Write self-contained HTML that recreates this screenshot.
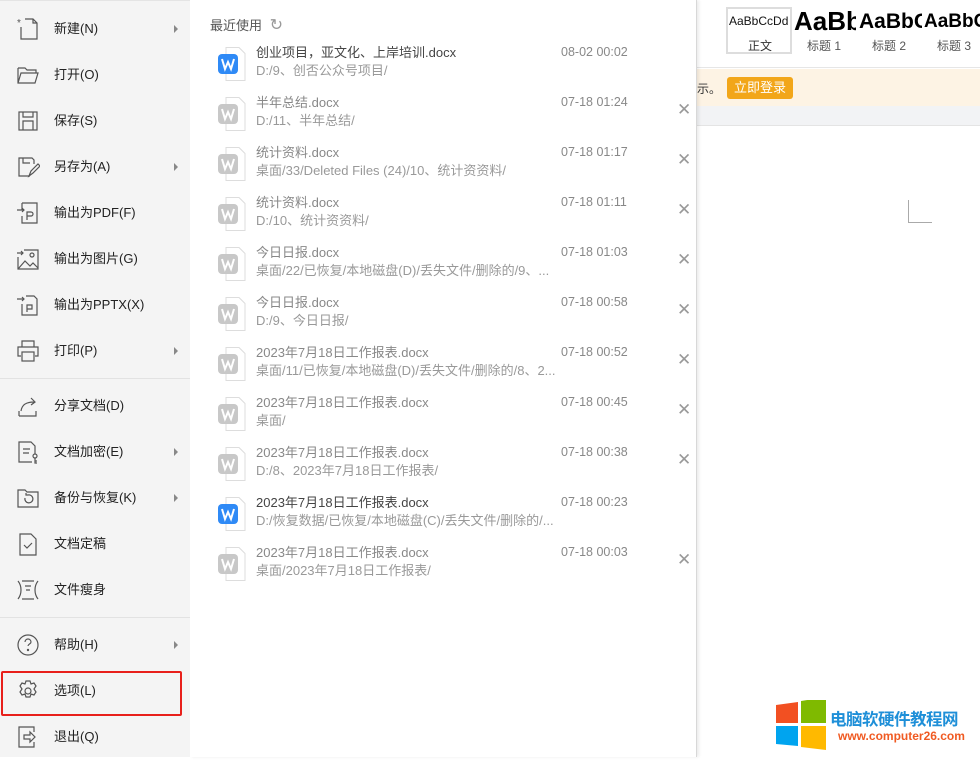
<!DOCTYPE html>
<html><head><meta charset="utf-8"><style>
*{margin:0;padding:0;box-sizing:border-box}
body{width:980px;height:757px;overflow:hidden;position:relative;background:#fff;font-family:"Liberation Sans","Noto Sans CJK SC",sans-serif;}
.side{position:absolute;left:0;top:0;width:190px;height:757px;background:#f4f4f4;border-top:1px solid #e4e4e4}
.it{position:absolute;left:0;width:190px;height:46px;font-size:13px;color:#222}
.it .t{position:absolute;left:54px;top:50%;transform:translateY(-50%);line-height:16px}
.it svg{position:absolute;left:16px;top:50%;transform:translateY(-50%)}
.it .ar{position:absolute;left:174px;top:50%;margin-top:-4px;width:0;height:0;border-left:4px solid #888;border-top:4px solid transparent;border-bottom:4px solid transparent}
.div{position:absolute;left:0;width:190px;height:1px;background:#e2e2e2}
.panel{position:absolute;left:190px;top:0;width:507px;height:757px;background:#fff;border-right:1px solid #d8d8d8;box-shadow:2px 0 3px rgba(0,0,0,.08)}
.hd{position:absolute;left:20px;top:15px;font-size:13px;color:#555}
.row{position:absolute;left:0;width:507px;height:50px;line-height:16px}
.row .ic{position:absolute;left:28px;top:-5px;width:28px;height:35px}
.row .n{position:absolute;left:66px;top:-7px;font-size:13px;color:#444}
.row .p{position:absolute;left:66px;top:11px;font-size:13px;color:#999}
.row .d{position:absolute;left:371px;top:-8px;font-size:12.5px;color:#888}
.row .x{position:absolute;left:487px;top:0px;font-size:17px;color:#999}
.grey .n{color:#888}
</style></head><body>
<div style="position:absolute;left:697px;top:0;width:283px;height:68px;background:#fff;border-bottom:1px solid #e6e6e6"></div>
<div style="position:absolute;left:726px;top:7px;width:66px;height:47px;border:2px solid #ddd;background:#fff"></div>
<div style="position:absolute;left:729px;top:14px;font-size:12px;color:#111">AaBbCcDd</div>
<div style="position:absolute;left:748px;top:37px;font-size:12px;color:#333">正文</div>
<div style="position:absolute;left:794px;top:6px;font-size:26px;font-weight:bold;color:#000;width:62px;overflow:hidden;white-space:nowrap">AaBb</div>
<div style="position:absolute;left:807px;top:37px;font-size:12px;color:#555">标题 1</div>
<div style="position:absolute;left:859px;top:10px;font-size:21px;font-weight:bold;color:#000;width:63px;overflow:hidden;white-space:nowrap">AaBbC</div>
<div style="position:absolute;left:872px;top:37px;font-size:12px;color:#555">标题 2</div>
<div style="position:absolute;left:924px;top:11px;font-size:19px;font-weight:bold;color:#000;white-space:nowrap">AaBbC</div>
<div style="position:absolute;left:937px;top:37px;font-size:12px;color:#555">标题 3</div>
<div style="position:absolute;left:697px;top:69px;width:283px;height:37px;background:#fdf3e4"></div>
<div style="position:absolute;left:697px;top:80px;font-size:12px;color:#333">示。</div>
<div style="position:absolute;left:727px;top:77px;width:66px;height:22px;background:#f2a619;border-radius:3px;color:#fff;font-size:13px;text-align:center;line-height:22px">立即登录</div>
<div style="position:absolute;left:697px;top:106px;width:283px;height:20px;background:#f2f3f5;border-bottom:1px solid #e4e4e4"></div>
<div style="position:absolute;left:908px;top:200px;width:24px;height:23px;border-left:1px solid #aaa;border-bottom:1px solid #aaa"></div>
<svg style="position:absolute;left:776px;top:700px" width="50" height="50"><polygon points="0,5 22,2 22,23 0,23" fill="#f25022"/><polygon points="25,1 50,-3 50,23 25,23" fill="#7fba00"/><polygon points="0,26 22,26 22,46 0,44" fill="#00a4ef"/><polygon points="25,26 50,26 50,50 25,47" fill="#ffb900"/></svg>
<div style="position:absolute;left:830px;top:706px;font-size:16.5px;font-weight:bold;color:#1e8fd8;letter-spacing:-.5px">电脑软硬件教程网</div>
<div style="position:absolute;left:838px;top:729px;font-size:12px;font-weight:bold;color:#f05a22">www.computer26.com</div>

<div class="side">
<div class="it" style="top:5px"><svg width="24" height="24" fill="none" stroke="#555" stroke-width="1.2"><path d="M5 10v12h16V6l-4-4h-8"/><path d="M17 2v4h4"/><text x="1" y="9" font-size="10" fill="#555" stroke="none">*</text></svg><span class="t">新建(N)</span><i class="ar"></i></div>
<div class="it" style="top:51px"><svg width="24" height="24" fill="none" stroke="#555" stroke-width="1.2"><path d="M2 5h7l2 2h9v3M2 5v15h17l3-10H5L2 20"/></svg><span class="t">打开(O)</span></div>
<div class="it" style="top:97px"><svg width="24" height="24" fill="none" stroke="#555" stroke-width="1.2"><rect x="3" y="3" width="18" height="18"/><path d="M7 3v5h10V3M7 21v-9h10v9"/></svg><span class="t">保存(S)</span></div>
<div class="it" style="top:143px"><svg width="24" height="24" fill="none" stroke="#555" stroke-width="1.2"><path d="M14 21H3V3h13l2 2v4M7 3v5h7"/><path d="M13 21l2-5 7-7 2 2-7 7z"/></svg><span class="t">另存为(A)</span><i class="ar"></i></div>
<div class="it" style="top:189px"><svg width="24" height="24" fill="none" stroke="#555" stroke-width="1.2"><path d="M6 2h15v20H6v-7M6 9V2"/><path d="M1 9h7M6 7l2 2-2 2"/><path d="M11 19v-8h4a2 2 0 010 4h-4"/></svg><span class="t">输出为PDF(F)</span></div>
<div class="it" style="top:235px"><svg width="24" height="24" fill="none" stroke="#555" stroke-width="1.2"><path d="M8 3h14v19H2V10"/><path d="M2 22l7-8 5 5 3-3 5 5"/><circle cx="16" cy="8" r="2"/><path d="M1 6h6M5 4l2 2-2 2"/></svg><span class="t">输出为图片(G)</span></div>
<div class="it" style="top:281px"><svg width="24" height="24" fill="none" stroke="#555" stroke-width="1.2"><path d="M10 3h8l3 3v16H6V11"/><path d="M1 6h7M6 4l2 2-2 2"/><path d="M11 19v-7h5v4h-5"/></svg><span class="t">输出为PPTX(X)</span></div>
<div class="it" style="top:327px"><svg width="24" height="24" fill="none" stroke="#555" stroke-width="1.2"><path d="M6 8V2h12v6M5 17H2V8h20v9h-3"/><rect x="6" y="13" width="12" height="9"/></svg><span class="t">打印(P)</span><i class="ar"></i></div>
<div class="div" style="top:377px"></div>
<div class="it" style="top:382px"><svg width="24" height="24" fill="none" stroke="#555" stroke-width="1.2"><path d="M3 22v-5M3 22h17v-5"/><path d="M5 17c1-7 6-9 13-9M15 4l4 4-4 3"/></svg><span class="t">分享文档(D)</span></div>
<div class="it" style="top:428px"><svg width="24" height="24" fill="none" stroke="#555" stroke-width="1.2"><path d="M16 22H3V2h12l4 4v8"/><path d="M7 9h7M7 13h6"/><circle cx="19" cy="16" r="2"/><path d="M19 18v5h2M19 21h2"/></svg><span class="t">文档加密(E)</span><i class="ar"></i></div>
<div class="it" style="top:474px"><svg width="24" height="24" fill="none" stroke="#555" stroke-width="1.2"><path d="M2 4h7l2 2h11v15H2z"/><path d="M9 12a4 4 0 103-3h-2M10 7v2h2"/></svg><span class="t">备份与恢复(K)</span><i class="ar"></i></div>
<div class="it" style="top:520px"><svg width="24" height="24" fill="none" stroke="#555" stroke-width="1.2"><path d="M4 2h11l5 5v16H4z"/><path d="M8 13l3 3 5-5"/></svg><span class="t">文档定稿</span></div>
<div class="it" style="top:566px"><svg width="24" height="24" fill="none" stroke="#555" stroke-width="1.2"><path d="M2 3c4 5 4 13 0 18M22 3c-4 5-4 13 0 18M6 3h12M6 21h12M9 8h6M10 12h4"/></svg><span class="t">文件瘦身</span></div>
<div class="div" style="top:616px"></div>
<div class="it" style="top:621px"><svg width="24" height="24" fill="none" stroke="#555" stroke-width="1.2"><circle cx="12" cy="12" r="10"/><path d="M9 9a3 3 0 116 0c0 2-3 2-3 4"/><circle cx="12" cy="17" r=".6" fill="#555"/></svg><span class="t">帮助(H)</span><i class="ar"></i></div>
<div class="it" style="top:667px"><svg width="24" height="24" fill="none" stroke="#555" stroke-width="1.2"><path d="M10 2h4l1 3 3-1 2 3-2 3 2 3-2 3-3-1-1 3h-4l-1-3-3 1-2-3 2-3-2-3 2-3 3 1z"/><circle cx="12" cy="12" r="3"/></svg><span class="t">选项(L)</span></div>
<div style="position:absolute;left:1px;top:670px;width:181px;height:45px;border:2px solid #e8201b;border-radius:2px"></div>
<div class="it" style="top:713px"><svg width="24" height="24" fill="none" stroke="#555" stroke-width="1.2"><path d="M18 7V2H3v20h15v-5"/><path d="M8 10h6V7l5 5-5 5v-3H8z"/></svg><span class="t">退出(Q)</span></div>
</div>

<div class="panel">
<div class="hd">最近使用 <span style="color:#999;font-size:16px;margin-left:4px">↻</span></div>
</div>
<div style="position:absolute;left:190px;top:0;width:507px">
<div class="row" style="top:52px"><svg class="ic" width="28" height="35"><path d="M8 .5h13l6 6v27H8z" fill="#fff" stroke="#ddd"/><rect x="0" y="7" width="20" height="20" rx="4" fill="#2f8af6"/><path d="M4 12l3 10 3-7 3 7 3-10" fill="none" stroke="#fff" stroke-width="2"/></svg><span class="n">创业项目，亚文化、上岸培训.docx</span><span class="p">D:/9、创否公众号项目/</span><span class="d">08-02 00:02</span></div>
<div class="row grey" style="top:102px"><svg class="ic" width="28" height="35"><path d="M8 .5h13l6 6v27H8z" fill="#fff" stroke="#ddd"/><rect x="0" y="7" width="20" height="20" rx="4" fill="#c8c8c8"/><path d="M4 12l3 10 3-7 3 7 3-10" fill="none" stroke="#fff" stroke-width="2"/></svg><span class="n">半年总结.docx</span><span class="p">D:/11、半年总结/</span><span class="d">07-18 01:24</span><span class="x">✕</span></div>
<div class="row grey" style="top:152px"><svg class="ic" width="28" height="35"><path d="M8 .5h13l6 6v27H8z" fill="#fff" stroke="#ddd"/><rect x="0" y="7" width="20" height="20" rx="4" fill="#c8c8c8"/><path d="M4 12l3 10 3-7 3 7 3-10" fill="none" stroke="#fff" stroke-width="2"/></svg><span class="n">统计资料.docx</span><span class="p">桌面/33/Deleted Files (24)/10、统计资资料/</span><span class="d">07-18 01:17</span><span class="x">✕</span></div>
<div class="row grey" style="top:202px"><svg class="ic" width="28" height="35"><path d="M8 .5h13l6 6v27H8z" fill="#fff" stroke="#ddd"/><rect x="0" y="7" width="20" height="20" rx="4" fill="#c8c8c8"/><path d="M4 12l3 10 3-7 3 7 3-10" fill="none" stroke="#fff" stroke-width="2"/></svg><span class="n">统计资料.docx</span><span class="p">D:/10、统计资资料/</span><span class="d">07-18 01:11</span><span class="x">✕</span></div>
<div class="row grey" style="top:252px"><svg class="ic" width="28" height="35"><path d="M8 .5h13l6 6v27H8z" fill="#fff" stroke="#ddd"/><rect x="0" y="7" width="20" height="20" rx="4" fill="#c8c8c8"/><path d="M4 12l3 10 3-7 3 7 3-10" fill="none" stroke="#fff" stroke-width="2"/></svg><span class="n">今日日报.docx</span><span class="p">桌面/22/已恢复/本地磁盘(D)/丢失文件/删除的/9、...</span><span class="d">07-18 01:03</span><span class="x">✕</span></div>
<div class="row grey" style="top:302px"><svg class="ic" width="28" height="35"><path d="M8 .5h13l6 6v27H8z" fill="#fff" stroke="#ddd"/><rect x="0" y="7" width="20" height="20" rx="4" fill="#c8c8c8"/><path d="M4 12l3 10 3-7 3 7 3-10" fill="none" stroke="#fff" stroke-width="2"/></svg><span class="n">今日日报.docx</span><span class="p">D:/9、今日日报/</span><span class="d">07-18 00:58</span><span class="x">✕</span></div>
<div class="row grey" style="top:352px"><svg class="ic" width="28" height="35"><path d="M8 .5h13l6 6v27H8z" fill="#fff" stroke="#ddd"/><rect x="0" y="7" width="20" height="20" rx="4" fill="#c8c8c8"/><path d="M4 12l3 10 3-7 3 7 3-10" fill="none" stroke="#fff" stroke-width="2"/></svg><span class="n">2023年7月18日工作报表.docx</span><span class="p">桌面/11/已恢复/本地磁盘(D)/丢失文件/删除的/8、2...</span><span class="d">07-18 00:52</span><span class="x">✕</span></div>
<div class="row grey" style="top:402px"><svg class="ic" width="28" height="35"><path d="M8 .5h13l6 6v27H8z" fill="#fff" stroke="#ddd"/><rect x="0" y="7" width="20" height="20" rx="4" fill="#c8c8c8"/><path d="M4 12l3 10 3-7 3 7 3-10" fill="none" stroke="#fff" stroke-width="2"/></svg><span class="n">2023年7月18日工作报表.docx</span><span class="p">桌面/</span><span class="d">07-18 00:45</span><span class="x">✕</span></div>
<div class="row grey" style="top:452px"><svg class="ic" width="28" height="35"><path d="M8 .5h13l6 6v27H8z" fill="#fff" stroke="#ddd"/><rect x="0" y="7" width="20" height="20" rx="4" fill="#c8c8c8"/><path d="M4 12l3 10 3-7 3 7 3-10" fill="none" stroke="#fff" stroke-width="2"/></svg><span class="n">2023年7月18日工作报表.docx</span><span class="p">D:/8、2023年7月18日工作报表/</span><span class="d">07-18 00:38</span><span class="x">✕</span></div>
<div class="row" style="top:502px"><svg class="ic" width="28" height="35"><path d="M8 .5h13l6 6v27H8z" fill="#fff" stroke="#ddd"/><rect x="0" y="7" width="20" height="20" rx="4" fill="#2f8af6"/><path d="M4 12l3 10 3-7 3 7 3-10" fill="none" stroke="#fff" stroke-width="2"/></svg><span class="n">2023年7月18日工作报表.docx</span><span class="p">D:/恢复数据/已恢复/本地磁盘(C)/丢失文件/删除的/...</span><span class="d">07-18 00:23</span></div>
<div class="row grey" style="top:552px"><svg class="ic" width="28" height="35"><path d="M8 .5h13l6 6v27H8z" fill="#fff" stroke="#ddd"/><rect x="0" y="7" width="20" height="20" rx="4" fill="#c8c8c8"/><path d="M4 12l3 10 3-7 3 7 3-10" fill="none" stroke="#fff" stroke-width="2"/></svg><span class="n">2023年7月18日工作报表.docx</span><span class="p">桌面/2023年7月18日工作报表/</span><span class="d">07-18 00:03</span><span class="x">✕</span></div>
</div>
</body></html>
